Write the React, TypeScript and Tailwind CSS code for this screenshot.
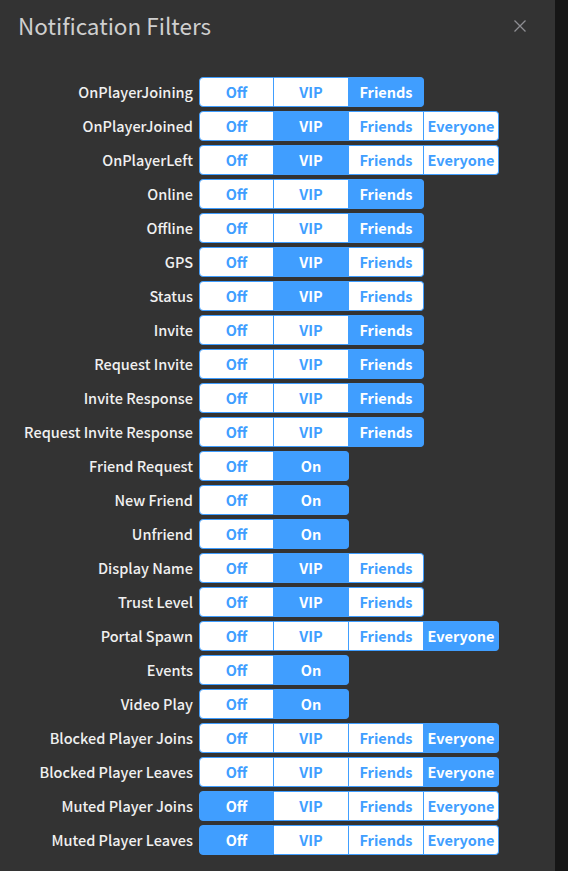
import React from "react";

type Row = { label: string; opts: string[]; sel: number };

const O3 = ["Off", "VIP", "Friends"];
const O4 = ["Off", "VIP", "Friends", "Everyone"];
const O2 = ["Off", "On"];

const rows: Row[] = [
  { label: "OnPlayerJoining", opts: O3, sel: 2 },
  { label: "OnPlayerJoined", opts: O4, sel: 1 },
  { label: "OnPlayerLeft", opts: O4, sel: 1 },
  { label: "Online", opts: O3, sel: 2 },
  { label: "Offline", opts: O3, sel: 2 },
  { label: "GPS", opts: O3, sel: 1 },
  { label: "Status", opts: O3, sel: 1 },
  { label: "Invite", opts: O3, sel: 2 },
  { label: "Request Invite", opts: O3, sel: 2 },
  { label: "Invite Response", opts: O3, sel: 2 },
  { label: "Request Invite Response", opts: O3, sel: 2 },
  { label: "Friend Request", opts: O2, sel: 1 },
  { label: "New Friend", opts: O2, sel: 1 },
  { label: "Unfriend", opts: O2, sel: 1 },
  { label: "Display Name", opts: O3, sel: 1 },
  { label: "Trust Level", opts: O3, sel: 1 },
  { label: "Portal Spawn", opts: O4, sel: 3 },
  { label: "Events", opts: O2, sel: 1 },
  { label: "Video Play", opts: O2, sel: 1 },
  { label: "Blocked Player Joins", opts: O4, sel: 3 },
  { label: "Blocked Player Leaves", opts: O4, sel: 3 },
  { label: "Muted Player Joins", opts: O4, sel: 0 },
  { label: "Muted Player Leaves", opts: O4, sel: 0 },
];

function Group({ opts, sel }: { opts: string[]; sel: number }) {
  return (
    <div className="flex">
      {opts.map((o, i) => {
        const first = i === 0;
        const last = i === opts.length - 1;
        const active = i === sel;
        return (
          <div
            key={o}
            className={
              "w-[75px] h-[30px] flex items-center justify-center border-y border-r border-[#409eff] text-[14.5px] font-bold leading-none " +
              (first ? "border-l rounded-l-[4px] " : "") +
              (last ? "rounded-r-[4px] " : "") +
              (active ? "bg-[#409eff] text-white" : "bg-white text-[#409eff]")
            }
          >
            {o}
          </div>
        );
      })}
    </div>
  );
}

export default function App() {
  return (
    <div
      className="w-[568px] h-[871px] bg-[#161616] flex overflow-hidden"
      style={{ fontFamily: '"Noto Sans CJK JP", "Noto Sans", sans-serif' }}
    >
      <div className="w-[555px] h-full bg-[#333333] flex flex-col">
        <div className="flex items-start justify-between pl-[18px] pr-[28px] pt-[8px] h-[77px]">
          <div className="text-[22.5px] text-[#cfcfcf] leading-[34px]">Notification Filters</div>
          <svg width="14" height="14" viewBox="0 0 14 14" className="mt-[11px]">
            <path d="M1.5 1.5 L12.5 12.5 M12.5 1.5 L1.5 12.5" stroke="#8e8e93" strokeWidth="1.3" fill="none" />
          </svg>
        </div>
        <div className="flex flex-col gap-[4px]">
          {rows.map((r) => (
            <div key={r.label} className="flex items-center">
              <div className="w-[199px] pr-[6px] text-right text-[14.5px] font-medium text-[#f0f0f0] leading-[30px] whitespace-nowrap">
                {r.label}
              </div>
              <Group opts={r.opts} sel={r.sel} />
            </div>
          ))}
        </div>
      </div>
    </div>
  );
}
